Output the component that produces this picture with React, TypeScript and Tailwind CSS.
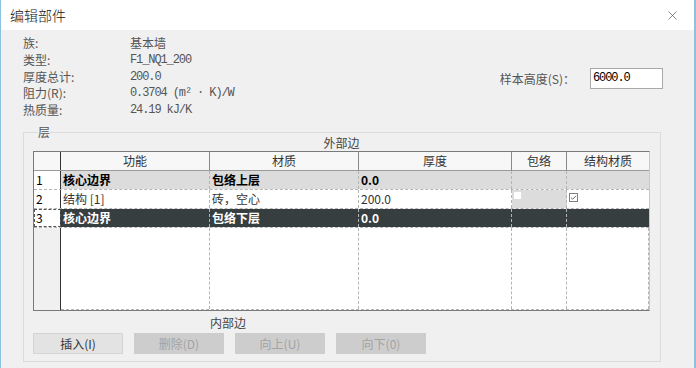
import { X } from 'lucide-react';

const song = { fontFamily: '"Noto Sans CJK SC", sans-serif' };
const yahei = { fontFamily: '"Noto Sans CJK SC", "Noto Sans", sans-serif' };
const mono = { fontFamily: '"Liberation Mono", "Noto Sans CJK SC", monospace', fontSize: '12px', letterSpacing: '-1.1px' };

type Row = {
  n: string;
  fn: string;
  mat: string;
  thick: string;
  kind: 'core' | 'normal' | 'selected';
};

const rows: Row[] = [
  { n: '1', fn: '核心边界', mat: '包络上层', thick: '0.0', kind: 'core' },
  { n: '2', fn: '结构 [1]', mat: '砖，空心', thick: '200.0', kind: 'normal' },
  { n: '3', fn: '核心边界', mat: '包络下层', thick: '0.0', kind: 'selected' },
];

const info = [
  ['族:', '基本墙', false],
  ['类型:', 'F1_NQ1_200', true],
  ['厚度总计:', '200.0', true],
  ['阻力(R):', '0.3704 (m² · K)/W', true],
  ['热质量:', '24.19 kJ/K', true],
] as const;

function Cell({ w, className = '', children }: { w: string; className?: string; children?: React.ReactNode }) {
  return (
    <div className={`${w} shrink-0 h-full border-r border-dashed border-[#b4b4b4] flex items-center px-[2px] truncate ${className}`}>
      {children}
    </div>
  );
}

export default function App() {
  return (
    <div
      className="w-[696px] h-[368px] flex flex-col bg-[#f0f0f0] border-l border-r-2 border-[#8cc1e2] overflow-hidden"
      style={yahei}
    >
      {/* title bar */}
      <div className="h-[30px] bg-white flex items-center justify-between pl-[9px] pr-[14px] shrink-0">
        <span className="text-[14px] text-[#111] font-light">编辑部件</span>
        <X size={15} strokeWidth={1} className="text-[#444]" />
      </div>

      {/* info */}
      <div className="h-[97px] flex justify-between shrink-0 pl-[22px] pr-[31px]">
        <div className="pt-[5px] text-[12px] text-[#555]" style={song}>
          {info.map(([k, v, m]) => (
            <div key={k} className="flex h-[16.8px] leading-[16.8px]">
              <span className="w-[107px]">{k}</span>
              <span style={m ? mono : undefined}>{v}</span>
            </div>
          ))}
        </div>
        <div className="pt-[38px] flex items-start gap-[15px]">
          <span className="text-[12px] text-[#555] leading-[21px]" style={song}>样本高度(S)：</span>
          <div className="w-[73px] h-[21px] bg-white border border-[#a9a9a9] leading-[19px] pl-[2px] text-black" style={mono}>
            6000.0
          </div>
        </div>
      </div>

      {/* group box */}
      <fieldset className="ml-[22px] w-[638px] h-[235px] border border-[#dcdcdc] px-[9px] pb-[6px] shrink-0">
        <legend className="ml-[5px] text-[12px] leading-[10px] text-[#555]" style={song}>层</legend>
        <div className="w-[617px] text-center text-[12px] leading-[12px] text-[#444]" style={song}>外部边</div>

        {/* grid */}
        <div className="mt-[2px] w-[617px] h-[160px] flex flex-col border border-[#7a7a7a] border-r-[#c8c8c8] bg-white text-[12px]">
          <div className="h-[19px] flex bg-[#f7f7f7] border-b border-[#9a9a9a] text-[#333] shrink-0">
            <div className="w-[27px] border-r border-[#333]" />
            <div className="w-[149px] border-r border-[#8a8a8a] text-center leading-[18px]">功能</div>
            <div className="w-[149px] border-r border-[#8a8a8a] text-center leading-[18px]">材质</div>
            <div className="w-[153px] border-r border-[#8a8a8a] text-center leading-[18px]">厚度</div>
            <div className="w-[55px] border-r border-[#8a8a8a] text-center leading-[18px]">包络</div>
            <div className="flex-1 text-center leading-[18px]">结构材质</div>
          </div>

          {rows.map((r) => {
            const bg =
              r.kind === 'core'
                ? 'bg-[#dcdcdc] text-black font-bold'
                : r.kind === 'selected'
                  ? 'bg-[#373e40] text-white font-bold'
                  : 'bg-white text-[#333]';
            return (
              <div key={r.n} className="h-[19px] flex shrink-0 border-b border-dashed border-[#b4b4b4]">
                <div
                  className={`w-[27px] shrink-0 h-full border-r border-[#333] bg-white flex items-center pl-[2px] text-black ${
                    r.kind === 'selected' ? 'outline outline-1 outline-dashed outline-[#555] -outline-offset-1' : ''
                  }`}
                >
                  {r.n}
                </div>
                <div className={`flex h-full flex-1 ${bg}`}>
                  <Cell w="w-[149px]">{r.fn}</Cell>
                  <Cell w="w-[149px]">{r.mat}</Cell>
                  <Cell w="w-[153px]">{r.thick}</Cell>
                  <Cell w="w-[55px]" className={r.kind === 'normal' ? 'bg-[#dcdcdc] items-start pt-[2px]' : ''}>
                    {r.kind === 'normal' && <span className="block w-[7px] h-[7px] bg-white" />}
                  </Cell>
                  <div className="flex-1 h-full flex items-start pt-[3px] pl-[2px]">
                    {r.kind === 'normal' && (
                      <svg width="9" height="9" viewBox="0 0 9 9">
                        <rect x="0.5" y="0.5" width="8" height="8" fill="white" stroke="#808080" />
                        <path d="M2 4.6 L3.7 6.2 L7 2.8" fill="none" stroke="#444" strokeWidth="0.8" />
                      </svg>
                    )}
                  </div>
                </div>
              </div>
            );
          })}

          <div className="flex-1 flex">
            <div className="w-[27px] shrink-0 bg-[#f0f0f0] border-r border-[#333]" />
            <div className="flex flex-1 border-b border-dashed border-[#b4b4b4]">
              <Cell w="w-[149px]" />
              <Cell w="w-[149px]" />
              <Cell w="w-[153px]" />
              <Cell w="w-[55px]" />
              <div className="flex-1 border-r border-dashed border-[#b4b4b4]" />
            </div>
          </div>
        </div>

        <div className="pl-[177px] pt-[6px] h-[22px] text-[12px] leading-[12px] text-[#444]" style={song}>内部边</div>

        <div className="flex gap-[11px] text-[12px]" style={song}>
          <button className="w-[90px] h-[21px] bg-[#e3e3e3] border border-[#d4d4d4] text-[#333]">插入(I)</button>
          <button className="w-[90px] h-[21px] bg-[#cdcdcd] border border-[#cdcdcd] text-[#a3a3a3]">删除(D)</button>
          <button className="w-[90px] h-[21px] bg-[#cdcdcd] border border-[#cdcdcd] text-[#a3a3a3]">向上(U)</button>
          <button className="w-[90px] h-[21px] bg-[#cdcdcd] border border-[#cdcdcd] text-[#a3a3a3]">向下(0)</button>
        </div>
      </fieldset>
    </div>
  );
}
